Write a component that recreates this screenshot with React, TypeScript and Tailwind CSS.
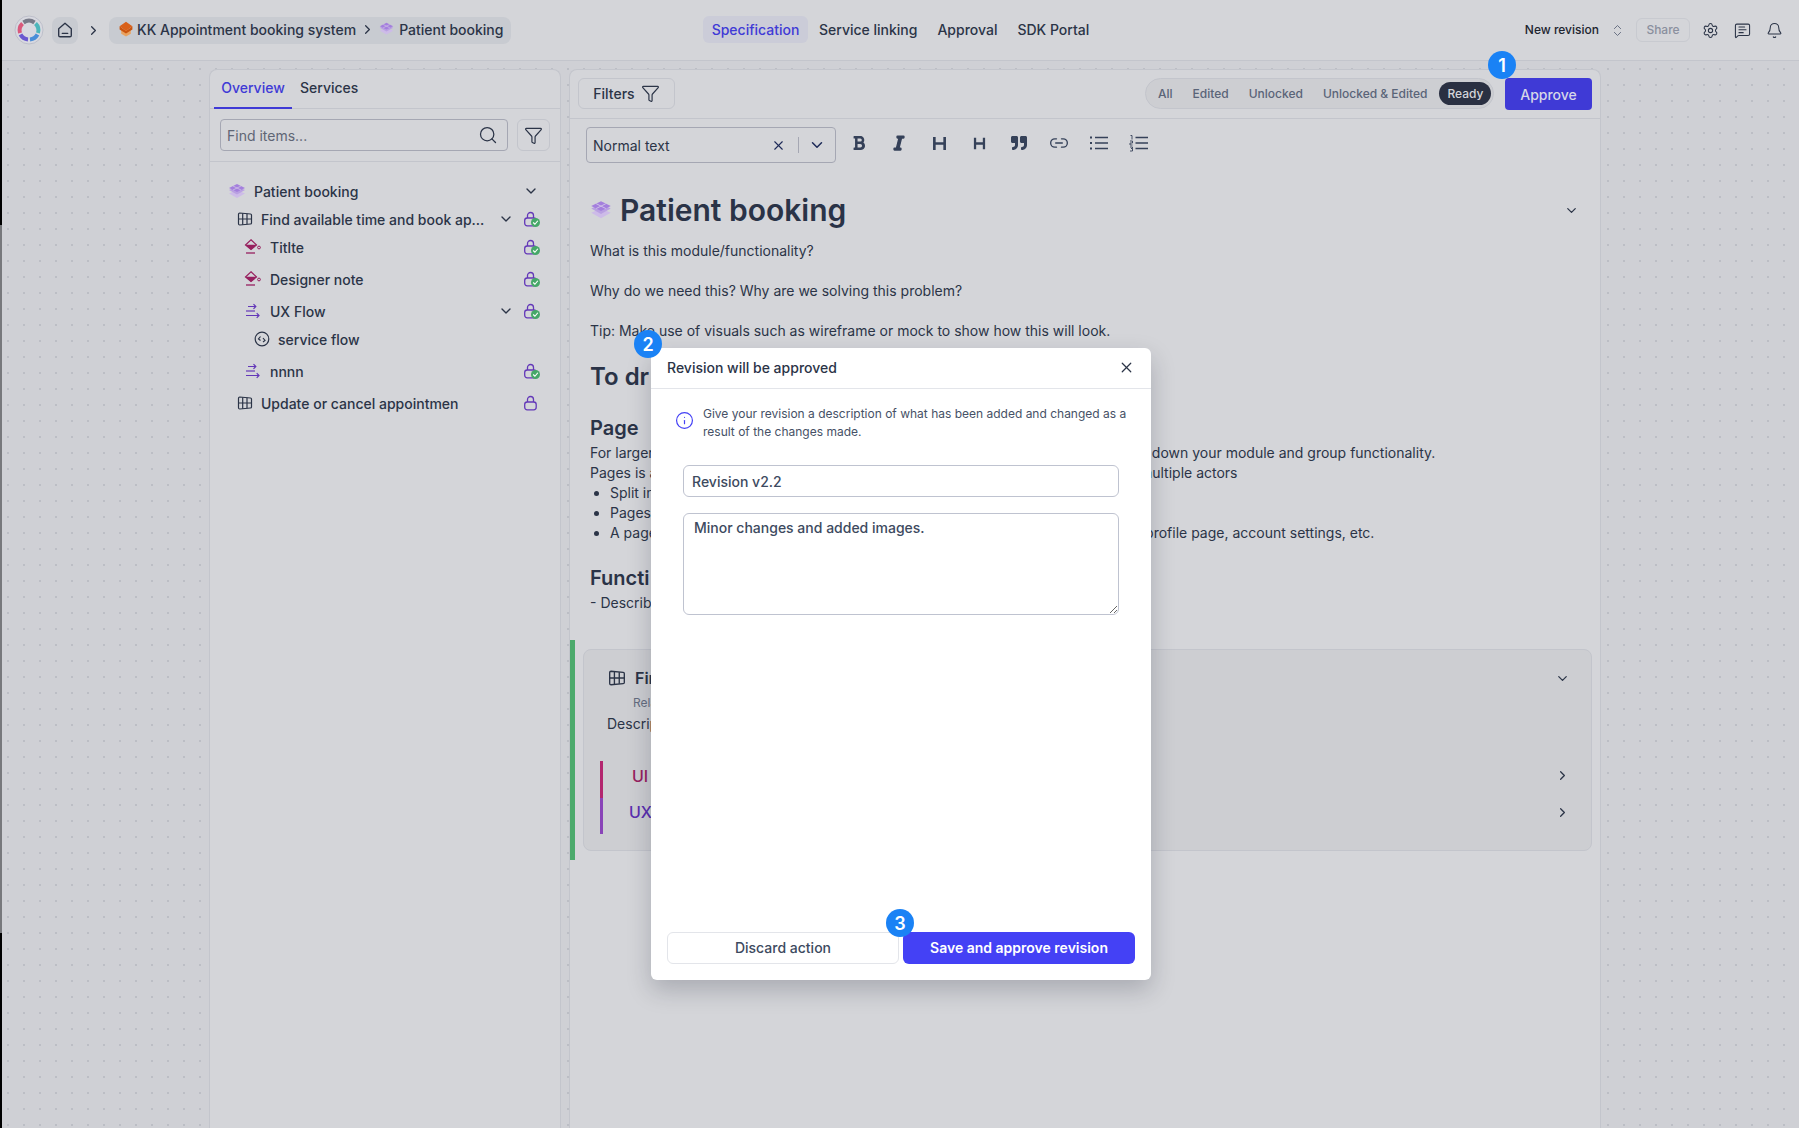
import { Bell, ChevronDown, ChevronRight, ChevronsUpDown, Filter, Info, Link2, MessageSquareText, Search, Settings, X } from "lucide-react";
import { FaBold, FaItalic, FaQuoteRight } from "react-icons/fa";

const font = "font-['Inter',sans-serif]";

function ModuleIcon({ size = 18 }: { size?: number }) {
  return (
    <svg width={size} height={(size * 16) / 18} viewBox="1 2 18 16" className="shrink-0">
      <path d="M10 9l8 3.500-8 4.500-8-4.500z" fill="#cdbbe8" />
      <path d="M10 5.500l8 3.500-8 4.500-8-4.500z" fill="#b9a0e2" />
      <path d="M10 3l8 4-8 4-8-4z" fill="#a47fdd" />
      <path d="M6 5l8 4M14 5L6 9" stroke="#cfc3e6" strokeWidth="0.8" />
    </svg>
  );
}

function ProjectIcon() {
  return (
    <svg width="16" height="16" viewBox="0 0 20 20" className="shrink-0">
      <path d="M4 11v5l6 3.500 6-3.500v-5z" fill="#e9a25f" />
      <path d="M2 6.500v4l8 5 8-5v-4l-8 6z" fill="#c9540f" />
      <path d="M10 1l8 5.500-8 6-8-6z" fill="#d9601a" />
    </svg>
  );
}

function Logo() {
  return (
    <svg width="30" height="30" viewBox="0 0 30 30" className="shrink-0">
      <circle cx="15" cy="15" r="14" fill="#d8d9e0" stroke="#bdbfca" strokeWidth="1" />
      <g fill="none" strokeWidth="4">
        <path d="M9.500 7.500A9.500 9.500 0 0 1 20.500 7.500" stroke="#777a88" />
        <path d="M21.500 8.500A9.500 9.500 0 0 1 24 18" stroke="#4cb6bb" />
        <path d="M23.500 19.500A9.500 9.500 0 0 1 16 24.400" stroke="#4a8ed8" />
        <path d="M14 24.400A9.500 9.500 0 0 1 6.500 19.500" stroke="#6a58d0" />
        <path d="M6 18A9.500 9.500 0 0 1 8.500 8.500" stroke="#d9597c" />
      </g>
    </svg>
  );
}

function HomeIcon() {
  return (
    <svg width="18" height="18" viewBox="0 0 20 20" fill="none" stroke="currentColor" strokeWidth="1.500" strokeLinejoin="round">
      <path d="M3 8.500L10 2.500l7 6V16a1.500 1.500 0 0 1-1.500 1.500h-11A1.500 1.500 0 0 1 3 16z" />
      <path d="M7 13.800h6" strokeLinecap="round" />
    </svg>
  );
}

function PaintIcon() {
  return (
    <svg width="18" height="18" viewBox="0 0 18 18" className="shrink-0">
      <path d="M7 1.800L12.500 7 7 11.500 1.500 7z" fill="none" stroke="#97205f" strokeWidth="1.200" />
      <path d="M1.500 6.800h11L7 11.800z" fill="#97205f" />
      <circle cx="15" cy="9.500" r="1.400" fill="none" stroke="#97205f" strokeWidth="1" />
      <path d="M2 15h9" stroke="#97205f" strokeWidth="1.300" />
    </svg>
  );
}

function FlowIcon() {
  return (
    <svg width="16" height="16" viewBox="0 0 16 16" fill="none" stroke="#6338b8" strokeWidth="1.200" className="shrink-0">
      <path d="M3 3.500h7.500M8.500 1.200l2.300 2.300-2.300 2.300" />
      <path d="M1 8h9" />
      <path d="M1 12.500h13M11.700 10.200l2.300 2.300-2.300 2.300" />
    </svg>
  );
}

function ServiceIcon() {
  return (
    <svg width="16" height="16" viewBox="0 0 16 16" fill="none" stroke="#2b3447" strokeWidth="1.200" className="shrink-0">
      <circle cx="8" cy="8" r="6.800" />
      <path d="M6.500 5.500L4.500 8l2 1.500M9 7l2 2.500-2 1.500" />
    </svg>
  );
}

function GridIcon({ size = 16 }: { size?: number }) {
  return (
    <svg width={size} height={size} viewBox="0 0 16 16" fill="none" stroke="#2b3447" strokeWidth="1.200" className="shrink-0">
      <path d="M1.500 3.200Q1.500 2 2.700 2L13.500 3q1 .1 1 1.100v7.800q0 1-1 1.100L2.700 14q-1.200 0-1.200-1.200z" />
      <path d="M5.700 2.300v11.400M10 2.800v10.400M1.500 8h13" />
    </svg>
  );
}

function HeadingIcon({ size }: { size: number }) {
  return (
    <svg width={size} height={size} viewBox="0 0 16 16" fill="none" stroke="currentColor" strokeWidth="2.800">
      <path d="M2.500 1v14M13.500 1v14M2.500 8h11" />
    </svg>
  );
}

function LockBadge({ done = true }: { done?: boolean }) {
  return (
    <span className="relative block h-4 w-4 shrink-0">
      <svg width="15" height="16" viewBox="0 0 15 16" fill="none" stroke="#6338b8" strokeWidth="1.300">
        <rect x="1.700" y="7" width="11.500" height="7.800" rx="2.500" />
        <path d="M4.500 7V4.500a3 3 0 0 1 6 0V7" />
      </svg>
      {done && (
        <span className="absolute -right-[1px] bottom-0 flex h-[9px] w-[9px] items-center justify-center rounded-full bg-[#45a868]">
          <svg width="7" height="7" viewBox="0 0 6 6" fill="none" stroke="#fff" strokeWidth="1"><path d="M1 3l1.500 1.500L5 1.500" /></svg>
        </span>
      )}
    </span>
  );
}

function TreeRow({ icon, label, top, chevron, lock = "done", className }: { icon: React.ReactNode; label: string; top: string; chevron?: boolean; lock?: "done" | "plain" | "chevron" | "none"; className: string }) {
  return (
    <div className={`flex h-5 items-center ${top}`}>
      <div className={`flex min-w-0 flex-1 items-center gap-[8px] ${className}`}>
        {icon}
        <span className="truncate text-[14px] font-medium text-[#2b3447]">{label}</span>
      </div>
      <span className="flex w-[17px] shrink-0 justify-center">{chevron && <ChevronDown size={16} className="text-[#2b3447]" />}</span>
      <span className="ml-[9px] mr-[21px] flex w-4 shrink-0 justify-center">
        {lock === "done" && <LockBadge />}
        {lock === "plain" && <LockBadge done={false} />}
        {lock === "chevron" && <ChevronDown size={16} className="shrink-0 text-[#2b3447]" />}
      </span>
    </div>
  );
}

function Sidebar() {
  return (
    <aside className="w-[352px] shrink-0 rounded-t-lg border border-b-0 border-[#c3c5cc] bg-[#d4d5d9]">
      <div className="flex h-[39px] items-start gap-[8px] border-b border-[#c3c5cc] pl-[4px]">
        <div className="h-[39px] w-[78px] border-b-2 border-[#3f3ad6] pt-[7px] text-center text-[14px] font-medium text-[#3f3ad6]">Overview</div>
        <div className="pt-[7px] text-[14px] font-medium text-[#2b3447]">Services</div>
      </div>
      <div className="flex h-[53px] items-start gap-[9px] border-b border-[#c3c5cc] pl-[10px] pr-[9px] pt-[10px]">
        <div className="flex h-[32px] w-[288px] items-center justify-between rounded-[4px] border border-[#a5a7b3] pl-[6px] pr-[9px]">
          <span className="text-[14px] text-[#5f6675]">Find items...</span>
          <Search size={20} strokeWidth={1.5} className="text-[#2b3447]" />
        </div>
        <div className="flex h-[32px] w-[33px] items-center justify-center rounded-md border border-[#c3c5cc]">
          <Filter size={19} strokeWidth={1.5} className="text-[#2b3447]" />
        </div>
      </div>
      <div className="pl-[18px] pt-[19px]">
        <TreeRow className="gap-[7px]" top="" icon={<ModuleIcon />} label="Patient booking" lock="chevron" />
        <TreeRow className="pl-[9px]" top="mt-[8px]" icon={<GridIcon />} label="Find available time and book ap..." chevron />
        <TreeRow className="pl-[16px]" top="mt-[8px]" icon={<PaintIcon />} label="Titlte" />
        <TreeRow className="pl-[16px]" top="mt-[12px]" icon={<PaintIcon />} label="Designer note" />
        <TreeRow className="pl-[17px] gap-[9px]" top="mt-[12px]" icon={<FlowIcon />} label="UX Flow" chevron />
        <TreeRow className="pl-[26px]" top="mt-[8px]" icon={<ServiceIcon />} label="service flow" lock="none" />
        <TreeRow className="pl-[17px] gap-[9px]" top="mt-[12px]" icon={<FlowIcon />} label="nnnn" />
        <TreeRow className="pl-[9px]" top="mt-[12px]" icon={<GridIcon />} label="Update or cancel appointmen" lock="plain" />
      </div>
    </aside>
  );
}

function Toolbar() {
  return (
    <div className="flex items-center pl-[16px] pt-[8px] text-[#354159]">
      <div className="flex h-[36px] w-[250px] items-center rounded-[4px] border border-[#a5a7b3] pl-[6px] text-[14px] text-[#2b3447]">
        <span className="flex-1">Normal text</span>
        <X size={15} strokeWidth={1.8} className="mr-[12px] text-[#1d2a58]" />
        <span className="h-[16px] w-px bg-[#a5a7b3]" />
        <ChevronDown size={18} className="mx-[9px] text-[#1d2a58]" />
      </div>
      <div className="ml-[13px] flex h-[36px] -translate-y-[2px] items-center gap-[20px]">
        <span className="flex w-[20px] justify-center"><FaBold size={16} /></span>
        <span className="flex w-[20px] justify-center"><FaItalic size={16} stroke="currentColor" strokeWidth={40} /></span>
        <span className="flex w-[20px] justify-center"><HeadingIcon size={15} /></span>
        <span className="flex w-[20px] justify-center"><HeadingIcon size={13} /></span>
        <span className="flex w-[20px] justify-center"><FaQuoteRight size={16} /></span>
        <Link2 size={20} strokeWidth={1.6} />
        <svg width="20" height="20" viewBox="0 0 20 20" fill="none" stroke="currentColor" strokeWidth="1.600">
          <path d="M6 4.500h13M6 10h13M6 15.500h13" />
          <path d="M1 4.500h2M1 10h2M1 15.500h2" strokeWidth="2.200" />
        </svg>
        <svg width="20" height="20" viewBox="0 0 20 20" fill="none" stroke="currentColor" strokeWidth="1.600">
          <path d="M6.500 4.500H19M6.500 10H19M6.500 15.500H19" />
          <path d="M1.500 2.500h1.500v4M1 8h2.500v2H1v2h2.500M1 14h2.500v1.500H2M3.500 15.500V18H1" strokeWidth="0.900" />
        </svg>
      </div>
    </div>
  );
}

function Segments() {
  return (
    <div className="flex h-[31px] w-[349px] items-center gap-[20px] whitespace-nowrap rounded-full border border-[#c3c5cc] bg-[#cdced2] pl-[12px] pr-[1px] text-[12px] font-medium text-[#5a6478]">
      <span>All</span>
      <span>Edited</span>
      <span>Unlocked</span>
      <span>Unlocked &amp; Edited</span>
      <span className="-ml-[8px] flex h-[23px] w-[52px] shrink-0 items-center justify-center rounded-full bg-[#2a3042] text-[#d4d5d9]">Ready</span>
    </div>
  );
}

function Document() {
  return (
    <main className="min-w-0 flex-1 rounded-t-lg border border-b-0 border-[#c3c5cc] bg-[#d4d5d9]">
      <div className="flex h-[49px] items-start justify-between border-b border-[#c3c5cc] pl-[8px] pr-[8px] pt-[8px]">
        <div className="flex h-[31px] w-[97px] items-center justify-center gap-[6px] rounded-md border border-[#c3c5cc] text-[14px] font-medium text-[#2b3447]">
          Filters <Filter size={19} strokeWidth={1.5} />
        </div>
        <div className="flex items-start gap-[11px]">
          <Segments />
          <div className="flex h-[32px] w-[87px] items-center justify-center rounded-[4px] bg-[#3f3ad6] text-[14px] font-medium text-[#d6d7e8]">Approve</div>
        </div>
      </div>
      <Toolbar />
      <div className="pl-[20px] pr-[8px] text-[14px] leading-5 text-[#2b3447]">
        <div className="mt-[29px] flex h-[36px] items-center gap-[8px]">
          <ModuleIcon size={22} />
          <h1 className="flex-1 text-[30px] font-semibold text-[#2a3347]">Patient booking</h1>
          <ChevronDown size={15} className="mr-[13px]" />
        </div>
        <p className="mt-[13px]">What is this module/functionality?</p>
        <p className="mt-[20px]">Why do we need this? Why are we solving this problem?</p>
        <p className="mt-[20px]">Tip: Make use of visuals such as wireframe or mock to show how this will look.</p>
        <h2 className="mt-[20px] text-[24px] font-semibold leading-8 text-[#2a3347]">To dr</h2>
        <h3 className="mt-[21px] text-[20px] font-semibold leading-7 text-[#2a3347]">Page</h3>
        <p className="mt-[1px]">For larger modules or complex functionality, you can also use pages to further break down your module and group functionality.</p>
        <p>Pages is a way of splitting up the module in several parts, especially useful if it has multiple actors</p>
        <ul className="list-disc pl-[20px]">
          <li>Split into logical parts</li>
          <li>Pages</li>
          <li>A page could be a set of related functionality for a certain type of users, such as profile page, account settings, etc.</li>
        </ul>
        <h3 className="mt-[21px] text-[20px] font-semibold leading-7 text-[#2a3347]">Functi</h3>
        <p className="mt-[1px]">- Describe</p>
      </div>
      <div className="mt-[27px] flex">
        <div className="h-[220px] w-[5px] shrink-0 bg-[#4caa6c]" />
        <section className="ml-[8px] mr-[8px] mt-[9px] h-[202px] flex-1 rounded-lg border border-[#c3c5cc] bg-[#cdced2] text-[#2b3447]">
          <div className="flex items-center justify-between pl-[24px] pr-[21px] pt-[16px]">
            <span className="flex items-center gap-[9px] text-[16px] font-semibold"><GridIcon size={18} />Find</span>
            <ChevronDown size={15} />
          </div>
          <p className="ml-[49px] mt-[4px] text-[12px] text-[#646d80]">Related</p>
          <p className="ml-[23px] mt-[1px] text-[14px]">Description</p>
          <div className="ml-[16px] mt-[27px] border-l-[3px] border-[#b3266f]">
            <div className="flex h-[37px] items-center justify-between pb-[8px] pl-[29px] pr-[21px] text-[16px] font-medium text-[#97205f]">UI<ChevronRight size={15} className="text-[#2b3447]" /></div>
          </div>
          <div className="ml-[16px] border-l-[3px] border-[#8944b8]">
            <div className="flex h-[36px] items-center justify-between pb-[8px] pl-[26px] pr-[21px] text-[16px] font-medium text-[#5a2fb0]">UX<ChevronRight size={15} className="text-[#2b3447]" /></div>
          </div>
        </section>
      </div>
    </main>
  );
}

function Header() {
  return (
    <header className="flex h-[61px] items-center border-b border-[#c3c5cc] bg-[#d4d5d9] pl-[14px] pr-[16px] text-[#2b3447]">
      <div className="flex w-[689px] items-center">
        <Logo />
        <span className="ml-[8px] flex h-[27px] w-[26px] items-center justify-center rounded-lg bg-[#c8cbd1]"><HomeIcon /></span>
        <ChevronRight size={15} className="ml-[8px]" />
        <div className="ml-[8px] flex h-[27px] w-[402px] items-center whitespace-nowrap rounded-lg bg-[#c8cbd1] pb-[2px] pl-[9px] text-[14px] font-medium">
          <ProjectIcon />
          <span className="ml-[3px]">KK Appointment booking system</span>
          <ChevronRight size={15} className="ml-[4px]" />
          <span className="ml-[4px]"><ModuleIcon size={15} /></span>
          <span className="ml-[5px]">Patient booking</span>
        </div>
      </div>
      <nav className="flex items-center pb-[1px] text-[14px] font-medium">
        <span className="flex h-[27px] w-[105px] items-center justify-center rounded-md bg-[#cbccd8] text-[#3f3ad6]">Specification</span>
        <span className="ml-[11px]">Service linking</span>
        <span className="ml-[20px]">Approval</span>
        <span className="ml-[20px]">SDK Portal</span>
      </nav>
      <div className="ml-auto flex items-center">
        <span className="text-[12px] font-medium text-[#20242f]">New revision</span>
        <ChevronsUpDown size={15} strokeWidth={1.4} className="ml-[11px] text-[#5a6478]" />
        <span className="ml-[11px] flex h-[24px] w-[54px] items-center justify-center rounded-md border border-[#c8cad0] text-[12px] font-medium text-[#8a8f9e]">Share</span>
        <Settings size={17} strokeWidth={1.5} className="ml-[12px]" />
        <MessageSquareText size={17} strokeWidth={1.5} className="ml-[15px]" />
        <Bell size={17} strokeWidth={1.5} className="ml-[15px]" />
      </div>
    </header>
  );
}

function Step({ n, className }: { n: number; className: string }) {
  return (
    <span className={`absolute z-20 flex h-[28px] w-[28px] items-center justify-center rounded-full bg-[#1a82f5] text-[18px] font-semibold text-white ${className}`}>{n}</span>
  );
}

function Modal() {
  return (
    <div className="absolute left-[651px] top-[348px] z-10 flex h-[632px] w-[500px] flex-col rounded-md bg-white text-[#2b3447] shadow-[0_10px_25px_rgba(20,25,40,0.22)]">
      <div className="flex h-[41px] shrink-0 items-center justify-between border-b border-[#e3e5ea] pb-[2px] pl-[16px] pr-[16px]">
        <span className="text-[14px] font-medium">Revision will be approved</span>
        <X size={17} strokeWidth={1.7} />
      </div>
      <div className="flex flex-1 flex-col px-[16px] pb-[16px]">
        <div className="flex gap-[9px] pl-[8px] pt-[16px]">
          <Info size={19} strokeWidth={1.5} className="mt-[6px] shrink-0 text-[#4441f5]" />
          <p className="text-[12px] leading-[18px] text-[#465166]">Give your revision a description of what has been added and changed as a result of the changes made.</p>
        </div>
        <input readOnly value="Revision v2.2" className="ml-[16px] mt-[24px] h-[32px] w-[436px] rounded-md border border-[#bfc3d0] px-[8px] text-[14px] font-medium text-[#3d4a60] outline-none" />
        <textarea readOnly value="Minor changes and added images." className="ml-[16px] mt-[16px] h-[102px] w-[436px] rounded-md border border-[#bfc3d0] px-[10px] py-[3px] text-[14px] font-medium text-[#3d4a60] outline-none" />
        <div className="mt-auto flex gap-[4px]">
          <div className="flex h-[32px] w-[232px] items-center justify-center rounded-md border border-[#e3e5ea] pb-[1px] text-[14px] font-medium text-[#3d4a60]">Discard action</div>
          <div className="flex h-[32px] w-[232px] items-center justify-center rounded-md bg-[#4441f5] pb-[1px] text-[14px] font-semibold text-white">Save and approve revision</div>
        </div>
      </div>
    </div>
  );
}

export default function App() {
  return (
    <div className={`relative flex h-[1128px] w-[1799px] flex-col overflow-hidden bg-[#cfd0d5] ${font}`}>
      <Header />
      <div className="flex min-h-0 flex-1 gap-[8px] bg-[radial-gradient(#bcbec5_1px,transparent_1.2px)] bg-[size:16px_16px] pl-[209px] pr-[198px] pt-[8px]">
        <Sidebar />
        <Document />
      </div>
      <div className="absolute bottom-0 left-0 top-0 flex w-[2px] flex-col">
        <div className="h-[225px] bg-black" />
        <div className="flex-1 bg-[#77787c]" />
        <div className="h-[195px] bg-black" />
      </div>
      <Modal />
      <Step n={1} className="left-[1488px] top-[51px]" />
      <Step n={2} className="left-[634px] top-[330px]" />
      <Step n={3} className="left-[886px] top-[909px]" />
    </div>
  );
}
